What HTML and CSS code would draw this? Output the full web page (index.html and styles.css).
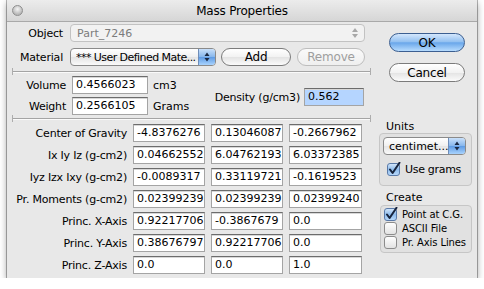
FILE: index.html
```html
<!DOCTYPE html>
<html>
<head>
<meta charset="utf-8">
<link rel="stylesheet" href="styles.css">
</head>
<body>
<div class="window">
  <div class="titlebar">
    <span class="close"></span>
    <span class="title">Mass Properties</span>
    <span></span>
  </div>
  <div class="content">
    <div class="left">
      <div class="row">
        <span class="lbl l-top">Object</span>
        <div class="popup disabled obj"><span class="ptext">Part_7246</span>
          <svg class="garrows" width="8" height="12" viewBox="0 0 8 12"><path d="M4 1 L7 5 H1 Z M4 11 L7 7 H1 Z" fill="#a8a8a8"/></svg>
        </div>
      </div>
      <div class="row mt6">
        <span class="lbl l-top">Material</span>
        <div class="popup mat"><span class="ptext">*** User Defined Mate...</span>
          <span class="barrows"><svg width="8" height="12" viewBox="0 0 8 12"><path d="M4 1.5 L6.5 5 H1.5 Z M4 10.5 L6.5 7 H1.5 Z" fill="#1b2a44"/></svg></span>
        </div>
        <div class="btn add">Add</div>
        <div class="btn remove">Remove</div>
      </div>
      <div class="sep s1"></div>
      <div class="vw">
        <div class="vw-rows">
          <div class="row"><span class="lbl l-vw">Volume</span><div class="field f76">0.4566023</div><span class="unit">cm3</span></div>
          <div class="row mt3"><span class="lbl l-vw">Weight</span><div class="field f76">0.2566105</div><span class="unit">Grams</span></div>
        </div>
        <div class="density"><span class="dlabel">Density (g/cm3)</span><div class="field sel">0.562</div></div>
      </div>
      <div class="sep s2"></div>
      <div class="grid">
        <span class="glbl">Center of Gravity</span><div class="field">-4.8376276</div><div class="field">0.13046087</div><div class="field">-0.2667962</div>
        <span class="glbl">Ix Iy Iz (g-cm2)</span><div class="field">0.04662552</div><div class="field">6.04762193</div><div class="field">6.03372385</div>
        <span class="glbl">Iyz Izx Ixy (g-cm2)</span><div class="field">-0.0089317</div><div class="field">0.33119721</div><div class="field">-0.1619523</div>
        <span class="glbl">Pr. Moments (g-cm2)</span><div class="field">0.02399239</div><div class="field">0.02399239</div><div class="field">0.02399240</div>
        <span class="glbl">Princ. X-Axis</span><div class="field">0.92217706</div><div class="field">-0.3867679</div><div class="field">0.0</div>
        <span class="glbl">Princ. Y-Axis</span><div class="field">0.38676797</div><div class="field">0.92217706</div><div class="field">0.0</div>
        <span class="glbl">Princ. Z-Axis</span><div class="field">0.0</div><div class="field">0.0</div><div class="field">1.0</div>
      </div>
    </div>
    <div class="right">
      <div class="btn ok">OK</div>
      <div class="btn cancel">Cancel</div>
      <div class="glabel units-l">Units</div>
      <div class="gbox units-box">
        <div class="popup units"><span class="ptext">centimet...</span>
          <span class="barrows"><svg width="8" height="12" viewBox="0 0 8 12"><path d="M4 1.5 L6.5 5 H1.5 Z M4 10.5 L6.5 7 H1.5 Z" fill="#1b2a44"/></svg></span>
        </div>
        <div class="cb cb-grams">
          <svg class="box" width="14" height="14" viewBox="0 0 14 14"><defs><linearGradient id="bl1" x1="0" y1="0" x2="0" y2="1"><stop offset="0" stop-color="#d6e8fb"/><stop offset="0.5" stop-color="#8fbcec"/><stop offset="1" stop-color="#b9dafc"/></linearGradient></defs><rect x="0.5" y="1.5" width="12" height="12" rx="2.5" fill="url(#bl1)" stroke="#5a7aa8"/><path d="M3 7.5 L5.6 11 L12.5 0.8" fill="none" stroke="#17243d" stroke-width="2" stroke-linejoin="round" stroke-linecap="round"/></svg>
          <span>Use grams</span>
        </div>
      </div>
      <div class="glabel create-l">Create</div>
      <div class="gbox create-box">
        <div class="cb">
          <svg class="box" width="14" height="14" viewBox="0 0 14 14"><defs><linearGradient id="bl2" x1="0" y1="0" x2="0" y2="1"><stop offset="0" stop-color="#d6e8fb"/><stop offset="0.5" stop-color="#8fbcec"/><stop offset="1" stop-color="#b9dafc"/></linearGradient></defs><rect x="0.5" y="1.5" width="12" height="12" rx="2.5" fill="url(#bl2)" stroke="#5a7aa8"/><path d="M3 7.5 L5.6 11 L12.5 0.8" fill="none" stroke="#17243d" stroke-width="2" stroke-linejoin="round" stroke-linecap="round"/></svg>
          <span>Point at C.G.</span>
        </div>
        <div class="cb">
          <svg class="box" width="14" height="14" viewBox="0 0 14 14"><defs><linearGradient id="wh1" x1="0" y1="0" x2="0" y2="1"><stop offset="0" stop-color="#ffffff"/><stop offset="1" stop-color="#e2e2e2"/></linearGradient></defs><rect x="0.5" y="1.5" width="12" height="12" rx="2.5" fill="url(#wh1)" stroke="#8c8c8c"/></svg>
          <span>ASCII File</span>
        </div>
        <div class="cb">
          <svg class="box" width="14" height="14" viewBox="0 0 14 14"><rect x="0.5" y="1.5" width="12" height="12" rx="2.5" fill="url(#wh1)" stroke="#8c8c8c"/></svg>
          <span>Pr. Axis Lines</span>
        </div>
      </div>
    </div>
  </div>
</div>
</body>
</html>
```

FILE: styles.css
```css
* { box-sizing: border-box; }
body {
  margin: 0;
  background: #ffffff;
  font-family: "DejaVu Sans", sans-serif;
  font-size: 11px;
  color: #000;
}
.window {
  margin-left: 7px;
  width: 470px;
  height: 278px;
  background: #e8e8e8;
  box-shadow: 0 0 0 1px rgba(0,0,0,0.28), 0 3px 7px rgba(0,0,0,0.4);
  display: flex;
  flex-direction: column;
}
.titlebar {
  height: 22px;
  flex: none;
  border-bottom: 1px solid #a9a9a9;
  background: linear-gradient(#ececec, #d6d6d6);
  display: grid;
  grid-template-columns: 1fr auto 1fr;
  align-items: center;
}
.close {
  width: 11px;
  height: 11px;
  margin-left: 5px;
  border-radius: 50%;
  background: radial-gradient(circle at 50% 35%, #f4f4f4, #b8b8b8 70%);
  border: 1px solid #8e8e8e;
}
.title {
  font-size: 12px;
  letter-spacing: -0.2px;
}
.content {
  flex: 1;
  display: flex;
}
.left {
  width: 365px;
  padding-top: 2px;
  display: flex;
  flex-direction: column;
}
.row {
  display: flex;
  align-items: center;
  height: 18px;
}
.mt6 { margin-top: 6px; }
.mt3 { margin-top: 3px; }
.lbl { text-align: right; white-space: nowrap; }
.l-top { width: 56px; margin-right: 7px; letter-spacing: -0.2px; }
.l-vw { width: 59px; margin-right: 6px; letter-spacing: -0.2px; }

.popup {
  height: 18px;
  display: flex;
  align-items: center;
  border-radius: 4px;
  overflow: hidden;
  white-space: nowrap;
}
.ptext { flex: 1; overflow: hidden; }
.popup.disabled {
  width: 295px;
  border: 1px solid #c2c2c2;
  background: #f2f2f2;
  color: #7c7c7c;
  padding-left: 6px;
}
.garrows { margin-right: 5px; }
.popup.mat, .popup.units {
  border: 1px solid #8a8a8a;
  background: linear-gradient(#ffffff, #f0f0f0 50%, #e4e4e4 51%, #fafafa);
  padding-left: 5px;
}
.popup.mat { width: 146px; }
.popup.mat .ptext { letter-spacing: -0.55px; }
.barrows {
  width: 17px;
  height: 100%;
  flex: none;
  display: flex;
  align-items: center;
  justify-content: center;
  border-left: 1px solid #6f8db8;
  background: linear-gradient(#c9e0fa, #86b6ec 50%, #5d9ae4 51%, #a9d3fd);
}

.btn {
  display: flex;
  align-items: center;
  justify-content: center;
  border-radius: 10px;
  border: 1px solid #7b7b7b;
  background: linear-gradient(#ffffff, #f2f2f2 50%, #e3e3e3 51%, #fbfbfb);
  font-size: 12px;
  letter-spacing: -0.2px;
}
.add { width: 70px; height: 18px; margin-left: 5px; }
.remove {
  width: 68px; height: 18px; margin-left: 6px;
  border-color: #bdbdbd;
  color: #9e9e9e;
  background: linear-gradient(#fafafa, #efefef);
}

.sep {
  height: 7px;
  width: 359px;
  margin-left: 5px;
  border-left: 1px solid #adadad;
  border-right: 1px solid #adadad;
  background: linear-gradient(#a4a4a4, #a4a4a4) 0 3px / 100% 1px no-repeat,
              linear-gradient(#fafafa, #fafafa) 0 4px / 100% 1px no-repeat;
}
.s1 { margin-top: 2px; }

.vw { display: flex; margin-top: 1px; }
.vw-rows { display: flex; flex-direction: column; }
.field {
  height: 18px;
  background: #fff;
  border: 1px solid #a4a4a4;
  border-top-color: #6c6c6c;
  box-shadow: inset 0 1px 0 #d8d8d8;
  padding-left: 3px;
  line-height: 16px;
  white-space: nowrap;
  overflow: hidden;
}
.f76 { width: 76px; }
.unit { margin-left: 5px; }
.density {
  margin-left: auto;
  margin-right: 8px;
  margin-top: 12px;
  display: flex;
  align-items: center;
  height: 18px;
}
.dlabel { margin-right: 4px; letter-spacing: -0.2px; }
.field.sel { width: 60px; background: #b5d5ff; }

.grid {
  margin-top: 2px;
  display: grid;
  grid-template-columns: 120px 72px 72px 73px;
  grid-auto-rows: 18px;
  column-gap: 6px;
  row-gap: 4px;
}
.glbl {
  text-align: right;
  align-self: center;
  white-space: nowrap;
  letter-spacing: -0.2px;
}

.right {
  flex: 1;
  display: flex;
  flex-direction: column;
}
.ok {
  margin: 11px 0 0 17px;
  width: 76px;
  height: 19px;
  border-color: #3c5f91;
  background: linear-gradient(#d4e7fc, #94c1f1 45%, #6aa7ea 52%, #b7dcfe);
}
.cancel {
  margin: 11px 0 0 17px;
  width: 76px;
  height: 19px;
}
.glabel { height: 13px; line-height: 13px; margin-left: 14px; }
.units-l { margin-top: 38px; }
.create-l { margin-top: 5px; margin-left: 14px; }
.gbox {
  border: 1px solid #c6c6c6;
  border-radius: 4px;
  background: #e1e1e1;
}
.units-box {
  margin: 0 0 0 7px;
  width: 93px;
  height: 53px;
  padding: 3px 0 0 3px;
}
.popup.units { width: 83px; }
.cb {
  display: flex;
  align-items: center;
  height: 14px;
  white-space: nowrap;
  font-size: 10px;
  letter-spacing: -0.1px;
}
.cb .box { flex: none; margin-right: 4px; }
.cb-grams { margin-top: 7px; margin-left: 4px; font-size: 11px; letter-spacing: -0.3px; }
.create-box {
  margin: 1px 0 0 8px;
  width: 92px;
  height: 48px;
  padding: 1px 0 0 3px;
}
```
